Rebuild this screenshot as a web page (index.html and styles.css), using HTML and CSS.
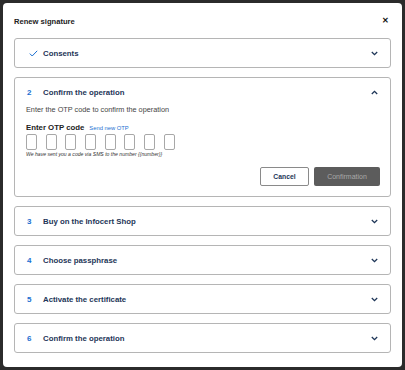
FILE: index.html
```html
<!DOCTYPE html>
<html lang="en-US">
<head>
    <title>Renew signature</title>
    <link rel="stylesheet" href="styles.css">
</head>
<body>

    <div class="modal">
        <div class="modal__header">
            <h1 class="modal__title">Renew signature</h1>
            <span class="modal__close">&#x2715;</span>
        </div>

        <div class="steps">
            <div class="step">
                <div class="step__header">
                    <span class="step__num">
                        <svg width="9" height="7" viewBox="0 0 9 7"><path d="M0.8 3.6 L3.2 6 L8.2 0.8" fill="none" stroke="#1b6fd1" stroke-width="1"/></svg>
                    </span>
                    <span class="step__label">Consents</span>
                    <svg class="step__chevron" width="7" height="5" viewBox="0 0 7 5"><path d="M0.8 1 L3.5 3.7 L6.2 1" fill="none" stroke="#1d3557" stroke-width="1.3"/></svg>
                </div>
            </div>

            <div class="step step--open">
                <div class="step__header">
                    <span class="step__num">2</span>
                    <span class="step__label">Confirm the operation</span>
                    <svg class="step__chevron" width="7" height="5" viewBox="0 0 7 5"><path d="M0.8 4 L3.5 1.3 L6.2 4" fill="none" stroke="#1d3557" stroke-width="1.3"/></svg>
                </div>
                <div class="step__body">
                    <p class="step__intro">Enter the OTP code to confirm the operation</p>
                    <div class="otp__head">
                        <span class="otp__title">Enter OTP code</span>
                        <a class="otp__resend">Send new OTP</a>
                    </div>
                    <div class="otp__boxes">
                        <span class="otp__box"></span>
                        <span class="otp__box"></span>
                        <span class="otp__box"></span>
                        <span class="otp__box"></span>
                        <span class="otp__box"></span>
                        <span class="otp__box"></span>
                        <span class="otp__box"></span>
                        <span class="otp__box"></span>
                    </div>
                    <p class="otp__hint">We have sent you a code via SMS to the number {{number}}</p>
                    <div class="actions">
                        <button class="btn btn--outline">Cancel</button>
                        <button class="btn btn--disabled">Confirmation</button>
                    </div>
                </div>
            </div>

            <div class="step">
                <div class="step__header">
                    <span class="step__num">3</span>
                    <span class="step__label">Buy on the Infocert Shop</span>
                    <svg class="step__chevron" width="7" height="5" viewBox="0 0 7 5"><path d="M0.8 1 L3.5 3.7 L6.2 1" fill="none" stroke="#1d3557" stroke-width="1.3"/></svg>
                </div>
            </div>

            <div class="step">
                <div class="step__header">
                    <span class="step__num">4</span>
                    <span class="step__label">Choose passphrase</span>
                    <svg class="step__chevron" width="7" height="5" viewBox="0 0 7 5"><path d="M0.8 1 L3.5 3.7 L6.2 1" fill="none" stroke="#1d3557" stroke-width="1.3"/></svg>
                </div>
            </div>

            <div class="step">
                <div class="step__header">
                    <span class="step__num">5</span>
                    <span class="step__label">Activate the certificate</span>
                    <svg class="step__chevron" width="7" height="5" viewBox="0 0 7 5"><path d="M0.8 1 L3.5 3.7 L6.2 1" fill="none" stroke="#1d3557" stroke-width="1.3"/></svg>
                </div>
            </div>

            <div class="step">
                <div class="step__header">
                    <span class="step__num">6</span>
                    <span class="step__label">Confirm the operation</span>
                    <svg class="step__chevron" width="7" height="5" viewBox="0 0 7 5"><path d="M0.8 1 L3.5 3.7 L6.2 1" fill="none" stroke="#1d3557" stroke-width="1.3"/></svg>
                </div>
            </div>
        </div>
    </div>

</body>
</html>
```

FILE: styles.css
```css
* {
    box-sizing: border-box;
}

body {
    background-color: #2b2b2b;
    margin: 0;
    padding: 3px;
    font-family: "Liberation Sans", Arial, sans-serif;
    color: #1d3557;
}

.modal {
    background-color: #fff;
    width: 399px;
    height: 364px;
    border-radius: 4px;
    padding: 0 11px;
}

.modal__header {
    display: flex;
    align-items: center;
    justify-content: space-between;
    height: 35px;
    padding-right: 2px;
}

.modal__title {
    margin: 0;
    font-size: 7.6px;
    font-weight: bold;
    color: #222;
    padding-top: 1px;
}

.modal__close {
    font-size: 8px;
    font-weight: bold;
    color: #111;
}

.steps {
    display: flex;
    flex-direction: column;
    gap: 9px;
}

.step {
    border: 1px solid #b5b5b5;
    border-radius: 3px;
}

.step__header {
    display: flex;
    align-items: center;
    height: 28px;
    padding: 0 12px 0 11px;
}

.step__num {
    width: 17px;
    font-size: 8px;
    font-weight: bold;
    color: #1b6fd1;
    display: flex;
    align-items: center;
    padding-left: 1px;
}

.step__num svg {
    margin-left: 2px;
}

.step__label {
    flex: 1;
    font-size: 7.8px;
    font-weight: bold;
    color: #1d3557;
}

.step__body {
    padding: 0 10px 10px 11px;
}

.step__intro {
    margin: 0;
    font-size: 7.3px;
    line-height: 8px;
    color: #444;
}

.otp__head {
    display: flex;
    align-items: baseline;
    gap: 5px;
    margin-top: 9px;
    line-height: 10px;
}

.otp__title {
    font-size: 7.8px;
    font-weight: bold;
    color: #222;
}

.otp__resend {
    font-size: 5.8px;
    color: #1b6fd1;
}

.otp__boxes {
    display: flex;
    gap: 8.7px;
    margin-top: 1px;
}

.otp__box {
    width: 11px;
    height: 16px;
    border: 1px solid #a8a8a8;
    border-radius: 2px;
}

.otp__hint {
    margin: 1px 0 0;
    font-size: 5.1px;
    line-height: 6px;
    font-style: italic;
    color: #333;
}

.actions {
    display: flex;
    justify-content: flex-end;
    gap: 5px;
    margin-top: 10px;
}

.btn {
    height: 19px;
    font-family: inherit;
    border-radius: 2px;
    padding: 0;
}

.btn--outline {
    width: 49px;
    background-color: #fff;
    border: 1px solid #8a8a8a;
    color: #1d3557;
    font-size: 6.8px;
    font-weight: bold;
}

.btn--disabled {
    width: 66px;
    background-color: #5c5c5c;
    border: none;
    color: #a9a9a9;
    font-size: 7px;
}
```
